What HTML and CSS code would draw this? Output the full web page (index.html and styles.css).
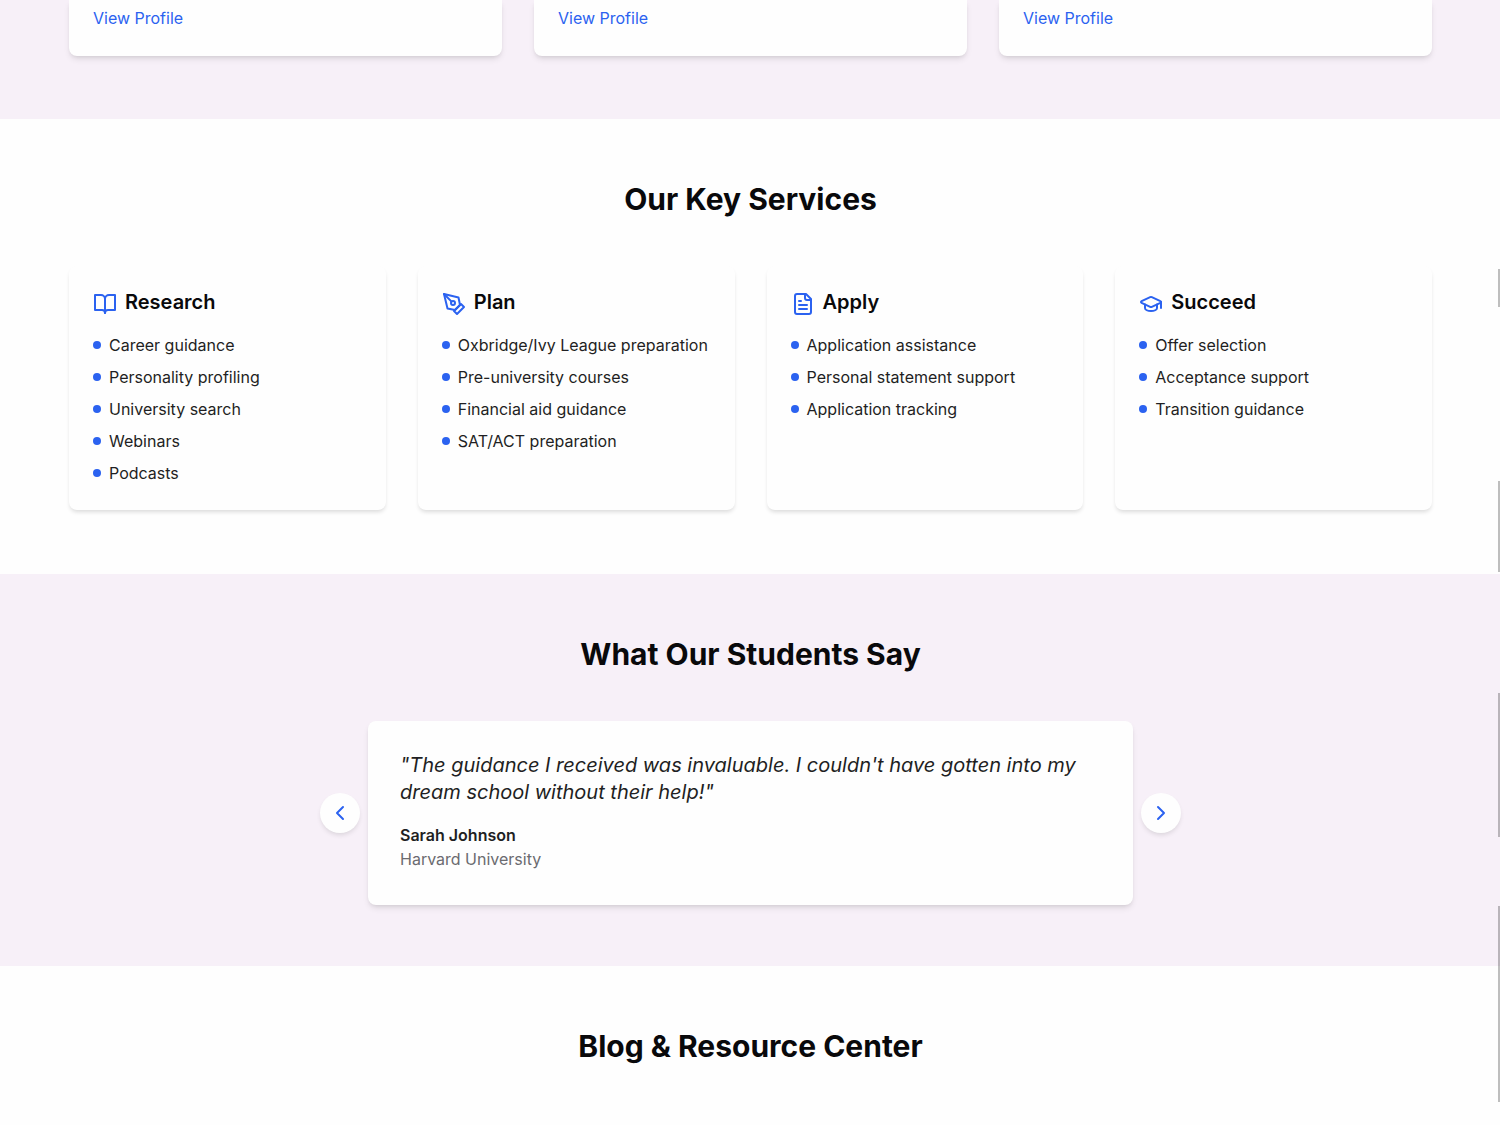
FILE: index.html
```html
<!DOCTYPE html>
<html lang="en">
<head>
    <meta charset="UTF-8">
    <meta name="viewport" content="width=device-width, initial-scale=1.0">
    <title>Student Mentoring</title>
    <link rel="stylesheet" href="styles.css">
</head>
<body>
    <section class="section mentors">
        <div class="container mentor-grid">
            <div class="card mentor-card"><a href="#">View Profile</a></div>
            <div class="card mentor-card"><a href="#">View Profile</a></div>
            <div class="card mentor-card"><a href="#">View Profile</a></div>
        </div>
    </section>

    <section class="section services">
        <div class="container">
            <h2>Our Key Services</h2>
            <div class="service-grid">
                <div class="card service-card">
                    <h3>
                        <svg class="icon" viewBox="0 0 24 24"><path d="M2 3h6a4 4 0 0 1 4 4v14a3 3 0 0 0-3-3H2z"/><path d="M22 3h-6a4 4 0 0 0-4 4v14a3 3 0 0 1 3-3h7z"/></svg>
                        Research
                    </h3>
                    <ul>
                        <li>Career guidance</li>
                        <li>Personality profiling</li>
                        <li>University search</li>
                        <li>Webinars</li>
                        <li>Podcasts</li>
                    </ul>
                </div>
                <div class="card service-card">
                    <h3>
                        <svg class="icon" viewBox="0 0 24 24"><path d="m12 19 7-7 3 3-7 7-3-3z"/><path d="m18 13-1.500-7.500L2 2l3.500 14.500L13 18l5-5z"/><path d="m2 2 7.586 7.586"/><circle cx="11" cy="11" r="2"/></svg>
                        Plan
                    </h3>
                    <ul>
                        <li>Oxbridge/Ivy League preparation</li>
                        <li>Pre-university courses</li>
                        <li>Financial aid guidance</li>
                        <li>SAT/ACT preparation</li>
                    </ul>
                </div>
                <div class="card service-card">
                    <h3>
                        <svg class="icon" viewBox="0 0 24 24"><path d="M15 2H6a2 2 0 0 0-2 2v16a2 2 0 0 0 2 2h12a2 2 0 0 0 2-2V7Z"/><path d="M14 2v4a2 2 0 0 0 2 2h4"/><path d="M10 9H8"/><path d="M16 13H8"/><path d="M16 17H8"/></svg>
                        Apply
                    </h3>
                    <ul>
                        <li>Application assistance</li>
                        <li>Personal statement support</li>
                        <li>Application tracking</li>
                    </ul>
                </div>
                <div class="card service-card">
                    <h3>
                        <svg class="icon" viewBox="0 0 24 24"><path d="M21.420 10.922a1 1 0 0 0-.019-1.838L12.830 5.180a2 2 0 0 0-1.660 0L2.600 9.080a1 1 0 0 0 0 1.832l8.570 3.908a2 2 0 0 0 1.660 0z"/><path d="M22 10v6"/><path d="M6 12.500V16a6 3 0 0 0 12 0v-3.500"/></svg>
                        Succeed
                    </h3>
                    <ul>
                        <li>Offer selection</li>
                        <li>Acceptance support</li>
                        <li>Transition guidance</li>
                    </ul>
                </div>
            </div>
        </div>
    </section>

    <section class="section testimonials">
        <div class="container">
            <h2>What Our Students Say</h2>
            <div class="carousel">
                <button class="arrow" type="button" aria-label="Previous">
                    <svg class="icon" viewBox="0 0 24 24"><path d="m15 18-6-6 6-6"/></svg>
                </button>
                <div class="card quote-card">
                    <p class="quote">"The guidance I received was invaluable. I couldn't have gotten into my dream school without their help!"</p>
                    <p class="name">Sarah Johnson</p>
                    <p class="school">Harvard University</p>
                </div>
                <button class="arrow" type="button" aria-label="Next">
                    <svg class="icon" viewBox="0 0 24 24"><path d="m9 18 6-6-6-6"/></svg>
                </button>
            </div>
        </div>
    </section>

    <section class="section blog">
        <div class="container">
            <h2>Blog &amp; Resource Center</h2>
        </div>
    </section>

    <!-- scroll marks along the right edge -->
    <div class="marks">
        <span class="mark mark-1"></span>
        <span class="mark mark-2"></span>
        <span class="mark mark-3"></span>
        <span class="mark mark-4"></span>
    </div>
</body>
</html>
```
FILE: styles.css
```css
* {
    box-sizing: border-box;
}

body {
    font-family: Inter, sans-serif;
    font-size: 16px;
    line-height: 24px;
    margin: 0;
    color: #1f1f23;
    background-color: #fefefe;
    position: relative;
    overflow-x: hidden;
}

h2, h3, p, ul {
    margin: 0;
    padding: 0;
}

h2 {
    font-size: 30px;
    line-height: 36px;
    font-weight: 700;
    text-align: center;
    color: #09090b;
    margin-bottom: 49px;
}

.section {
    padding: 62px 68px 63px 69px;
}

.container {
    max-width: 1364px;
    margin: 0 auto;
}

.card {
    background-color: #fefefe;
    border-radius: 8px;
    box-shadow: 0 4px 6px -1px rgba(0, 0, 0, 0.1), 0 2px 4px -2px rgba(0, 0, 0, 0.1);
}

.icon {
    width: 24px;
    height: 24px;
    fill: none;
    stroke: #2b62f0;
    stroke-width: 2;
    stroke-linecap: round;
    stroke-linejoin: round;
}

/* mentors */
.mentors {
    background-color: #f7f0f8;
    padding-top: 0;
}

.mentor-grid {
    display: grid;
    grid-template-columns: repeat(3, 1fr);
    gap: 32px;
}

.mentor-card {
    padding: 6px 24px 26px;
    border-radius: 0 0 8px 8px;
}

.mentor-card a {
    color: #2b62f0;
    text-decoration: none;
}

/* services */
.services {
    padding-bottom: 64px;
}

.service-grid {
    display: grid;
    grid-template-columns: repeat(4, 1fr);
    gap: 32px;
}

.service-card {
    padding: 24px 24px 25px;
    box-shadow: 0 3px 4px -1px rgba(0, 0, 0, 0.14);
}

.service-card h3 {
    display: flex;
    gap: 8px;
    font-size: 20px;
    line-height: 24px;
    font-weight: 600;
    color: #09090b;
    margin-bottom: 17px;
}

.service-card .icon {
    margin-top: 2px;
}

.service-card ul {
    display: flex;
    flex-direction: column;
    gap: 8px;
    list-style: none;
}

.service-card li {
    display: flex;
    align-items: center;
    gap: 8px;
}

.service-card li::before {
    content: "";
    width: 8px;
    height: 8px;
    border-radius: 50%;
    background-color: #2b62f0;
}

/* testimonials */
.testimonials {
    background-color: #f7f0f8;
    padding-bottom: 61px;
}

.carousel {
    display: flex;
    align-items: center;
    justify-content: center;
    gap: 8px;
}

.quote-card {
    flex: 0 1 765px;
    padding: 31px 32px 34px;
}

.quote {
    font-size: 20px;
    line-height: 27px;
    font-style: italic;
    margin-bottom: 17px;
}

.name {
    font-weight: 600;
}

.school {
    color: #6b6b70;
}

.arrow {
    display: flex;
    align-items: center;
    justify-content: center;
    width: 40px;
    height: 40px;
    padding: 0;
    border: none;
    border-radius: 50%;
    background-color: #fefefe;
    box-shadow: 0 3px 5px -1px rgba(0, 0, 0, 0.12);
    cursor: pointer;
}

/* right edge */
.mark {
    position: absolute;
    right: 0;
    width: 2px;
    background-color: rgba(0, 0, 0, 0.25);
}

.mark-1 {
    top: 269px;
    height: 38px;
}

.mark-2 {
    top: 481px;
    height: 91px;
}

.mark-3 {
    top: 693px;
    height: 144px;
}

.mark-4 {
    top: 906px;
    height: 196px;
}
```
